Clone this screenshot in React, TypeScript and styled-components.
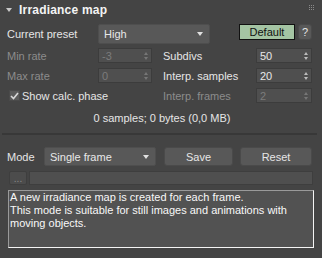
import React from 'react';
import styled, { createGlobalStyle } from 'styled-components';

const GlobalStyle = createGlobalStyle`
  html, body {
    margin: 0;
    padding: 0;
    background: #444444;
  }
  body {
    font-family: "Liberation Sans", Arial, sans-serif;
    font-size: 11px;
    color: #e2e2e2;
  }
`;

const Panel = styled.div`
  width: 322px;
  height: 258px;
  background: #444444;
  position: relative;
  overflow: hidden;
`;

const Header = styled.div`
  height: 20px;
  display: flex;
  align-items: center;
  padding-left: 6px;
  gap: 7px;
`;

const Title = styled.span`
  font-weight: bold;
  font-size: 12px;
  color: #f4f4f4;
  letter-spacing: 0.2px;
`;

const Grip = styled.div`
  position: absolute;
  top: 5px;
  right: 8px;
  display: grid;
  grid-template-columns: repeat(3, 1px);
  gap: 1px;
  & > i {
    width: 1px;
    height: 1px;
    background: #8a8a8a;
  }
`;

const Row = styled.div<{ $top: number; $h: number }>`
  display: flex;
  align-items: center;
  margin-top: ${p => p.$top}px;
  height: ${p => p.$h}px;
  padding-left: 7px;
`;

const Label = styled.span<{ $w: number; $disabled?: boolean }>`
  width: ${p => p.$w}px;
  flex: none;
  white-space: nowrap;
  color: ${p => (p.$disabled ? '#8c8c8c' : '#e6e6e6')};
`;

const Dropdown = styled.div<{ $w: number }>`
  width: ${p => p.$w}px;
  height: 100%;
  box-sizing: border-box;
  flex: none;
  background: #585858;
  border: 1px solid #4e4e4e;
  border-radius: 2px;
  display: flex;
  align-items: center;
  justify-content: space-between;
  padding: 0 6px 0 5px;
  color: #e8e8e8;
`;

const DownArrow = styled.span`
  width: 0;
  height: 0;
  border-left: 3px solid transparent;
  border-right: 3px solid transparent;
  border-top: 4px solid #e0e0e0;
`;

const Spinner = styled.div<{ $w: number; $disabled?: boolean }>`
  width: ${p => p.$w}px;
  height: 100%;
  box-sizing: border-box;
  flex: none;
  background: #4f4f4f;
  border: 1px solid #3c3c3c;
  display: flex;
  align-items: center;
  justify-content: space-between;
  padding: 0 3px 0 3px;
  color: ${p => (p.$disabled ? '#7c7c7c' : '#e8e8e8')};
`;

const Arrows = styled.span<{ $disabled?: boolean }>`
  display: flex;
  flex-direction: column;
  gap: 2px;
  & > i {
    width: 0;
    height: 0;
    border-left: 2px solid transparent;
    border-right: 2px solid transparent;
  }
  & > i:first-child {
    border-bottom: 3px solid ${p => (p.$disabled ? '#777' : '#bcbcbc')};
  }
  & > i:last-child {
    border-top: 3px solid ${p => (p.$disabled ? '#777' : '#bcbcbc')};
  }
`;

const Gap = styled.span<{ $w: number }>`
  width: ${p => p.$w}px;
  flex: none;
`;

const Button = styled.button<{ $w: number; $h?: number; $green?: boolean }>`
  width: ${p => p.$w}px;
  height: ${p => (p.$h ? `${p.$h}px` : '100%')};
  flex: none;
  box-sizing: border-box;
  margin: 0;
  padding: 0;
  font: inherit;
  background: ${p => (p.$green ? '#a4c4a3' : '#585858')};
  color: ${p => (p.$green ? '#111' : '#e6e6e6')};
  border: 1px solid ${p => (p.$green ? '#111' : '#4a4a4a')};
  border-radius: ${p => (p.$green ? '0' : '3px')};
  align-self: flex-start;
`;

const Check = styled.span`
  width: 11px;
  height: 11px;
  box-sizing: border-box;
  background: #5a5a5a;
  border: 1px solid #4a4a4a;
  margin: 0 2px 0 2px;
  display: flex;
  align-items: center;
  justify-content: center;
  flex: none;
`;

const Status = styled.div`
  margin-top: 9px;
  height: 12px;
  text-align: center;
  padding-left: 2px;
  color: #e6e6e6;
`;

const Separator = styled.div`
  margin: 9px 5px 0 2px;
  height: 2px;
  background: #383838;
`;

const Field = styled.div<{ $w: number }>`
  width: ${p => p.$w}px;
  height: 100%;
  flex: none;
  box-sizing: border-box;
  background: #4f4f4f;
  border: 1px solid #3e3e3e;
`;

const SmallButton = styled.div`
  width: 18px;
  height: 100%;
  flex: none;
  box-sizing: border-box;
  background: #4c4c4c;
  border: 1px solid #3e3e3e;
  border-radius: 2px;
  color: #8a8a8a;
  font-size: 10px;
  display: flex;
  align-items: flex-end;
  justify-content: center;
  line-height: 10px;
  margin-left: 2px;
`;

const Info = styled.div`
  margin: 5px 8px 0 8px;
  height: 58px;
  box-sizing: border-box;
  background: #525252;
  border-top: 1px solid #9a9a9a;
  border-left: 1px solid #9a9a9a;
  border-right: 1px solid #f4f4f4;
  border-bottom: 1px solid #f4f4f4;
  padding: 0 0 0 1px;
  color: #f8f8f8;
  line-height: 13px;
`;

const SpinArrows = ({ disabled }: { disabled?: boolean }) => (
  <Arrows $disabled={disabled}>
    <i />
    <i />
  </Arrows>
);

export default function App() {
  return (
    <Panel>
      <GlobalStyle />
      <Header>
        <svg width="6" height="5" viewBox="0 0 6 5">
          <path d="M0 0 H6 L3 4 Z" fill="#c8c8c8" />
        </svg>
        <Title>Irradiance map</Title>
      </Header>
      <Grip>
        {Array.from({ length: 9 }).map((_, i) => (
          <i key={i} />
        ))}
      </Grip>

      <Row $top={4} $h={20}>
        <Label $w={91}>Current preset</Label>
        <Dropdown $w={112}>
          High
          <DownArrow />
        </Dropdown>
        <Gap $w={29} />
        <Button $w={56} $h={16} $green>
          Default
        </Button>
        <Gap $w={3} />
        <Button $w={14} $h={16}>
          ?
        </Button>
      </Row>

      <Row $top={4} $h={15}>
        <Label $w={91} $disabled>Min rate</Label>
        <Spinner $w={54} $disabled>
          -3
          <SpinArrows disabled />
        </Spinner>
        <Gap $w={11} />
        <Label $w={93}>Subdivs</Label>
        <Spinner $w={56}>
          50
          <SpinArrows />
        </Spinner>
      </Row>

      <Row $top={5} $h={15}>
        <Label $w={91} $disabled>Max rate</Label>
        <Spinner $w={54} $disabled>
          0
          <SpinArrows disabled />
        </Spinner>
        <Gap $w={11} />
        <Label $w={93}>Interp. samples</Label>
        <Spinner $w={56}>
          20
          <SpinArrows />
        </Spinner>
      </Row>

      <Row $top={5} $h={15}>
        <Check>
          <svg width="9" height="8" viewBox="0 0 9 8">
            <path d="M1 4 L3.5 6.5 L8 1" stroke="#d8d8d8" strokeWidth="1.6" fill="none" />
          </svg>
        </Check>
        <Label $w={141}>Show calc. phase</Label>
        <Label $w={93} $disabled>Interp. frames</Label>
        <Spinner $w={56} $disabled>
          2
          <SpinArrows disabled />
        </Spinner>
      </Row>

      <Status>0 samples; 0 bytes (0,0 MB)</Status>
      <Separator />

      <Row $top={12} $h={19}>
        <Label $w={37}>Mode</Label>
        <Dropdown $w={112}>
          Single frame
          <DownArrow />
        </Dropdown>
        <Gap $w={8} />
        <Button $w={69} $h={19}>Save</Button>
        <Gap $w={7} />
        <Button $w={72} $h={19}>Reset</Button>
      </Row>

      <Row $top={5} $h={14}>
        <SmallButton>...</SmallButton>
        <Gap $w={2} />
        <Field $w={284} />
      </Row>

      <Info>
        A new irradiance map is created for each frame.
        <br />
        This mode is suitable for still images and animations with moving objects.
      </Info>
    </Panel>
  );
}
